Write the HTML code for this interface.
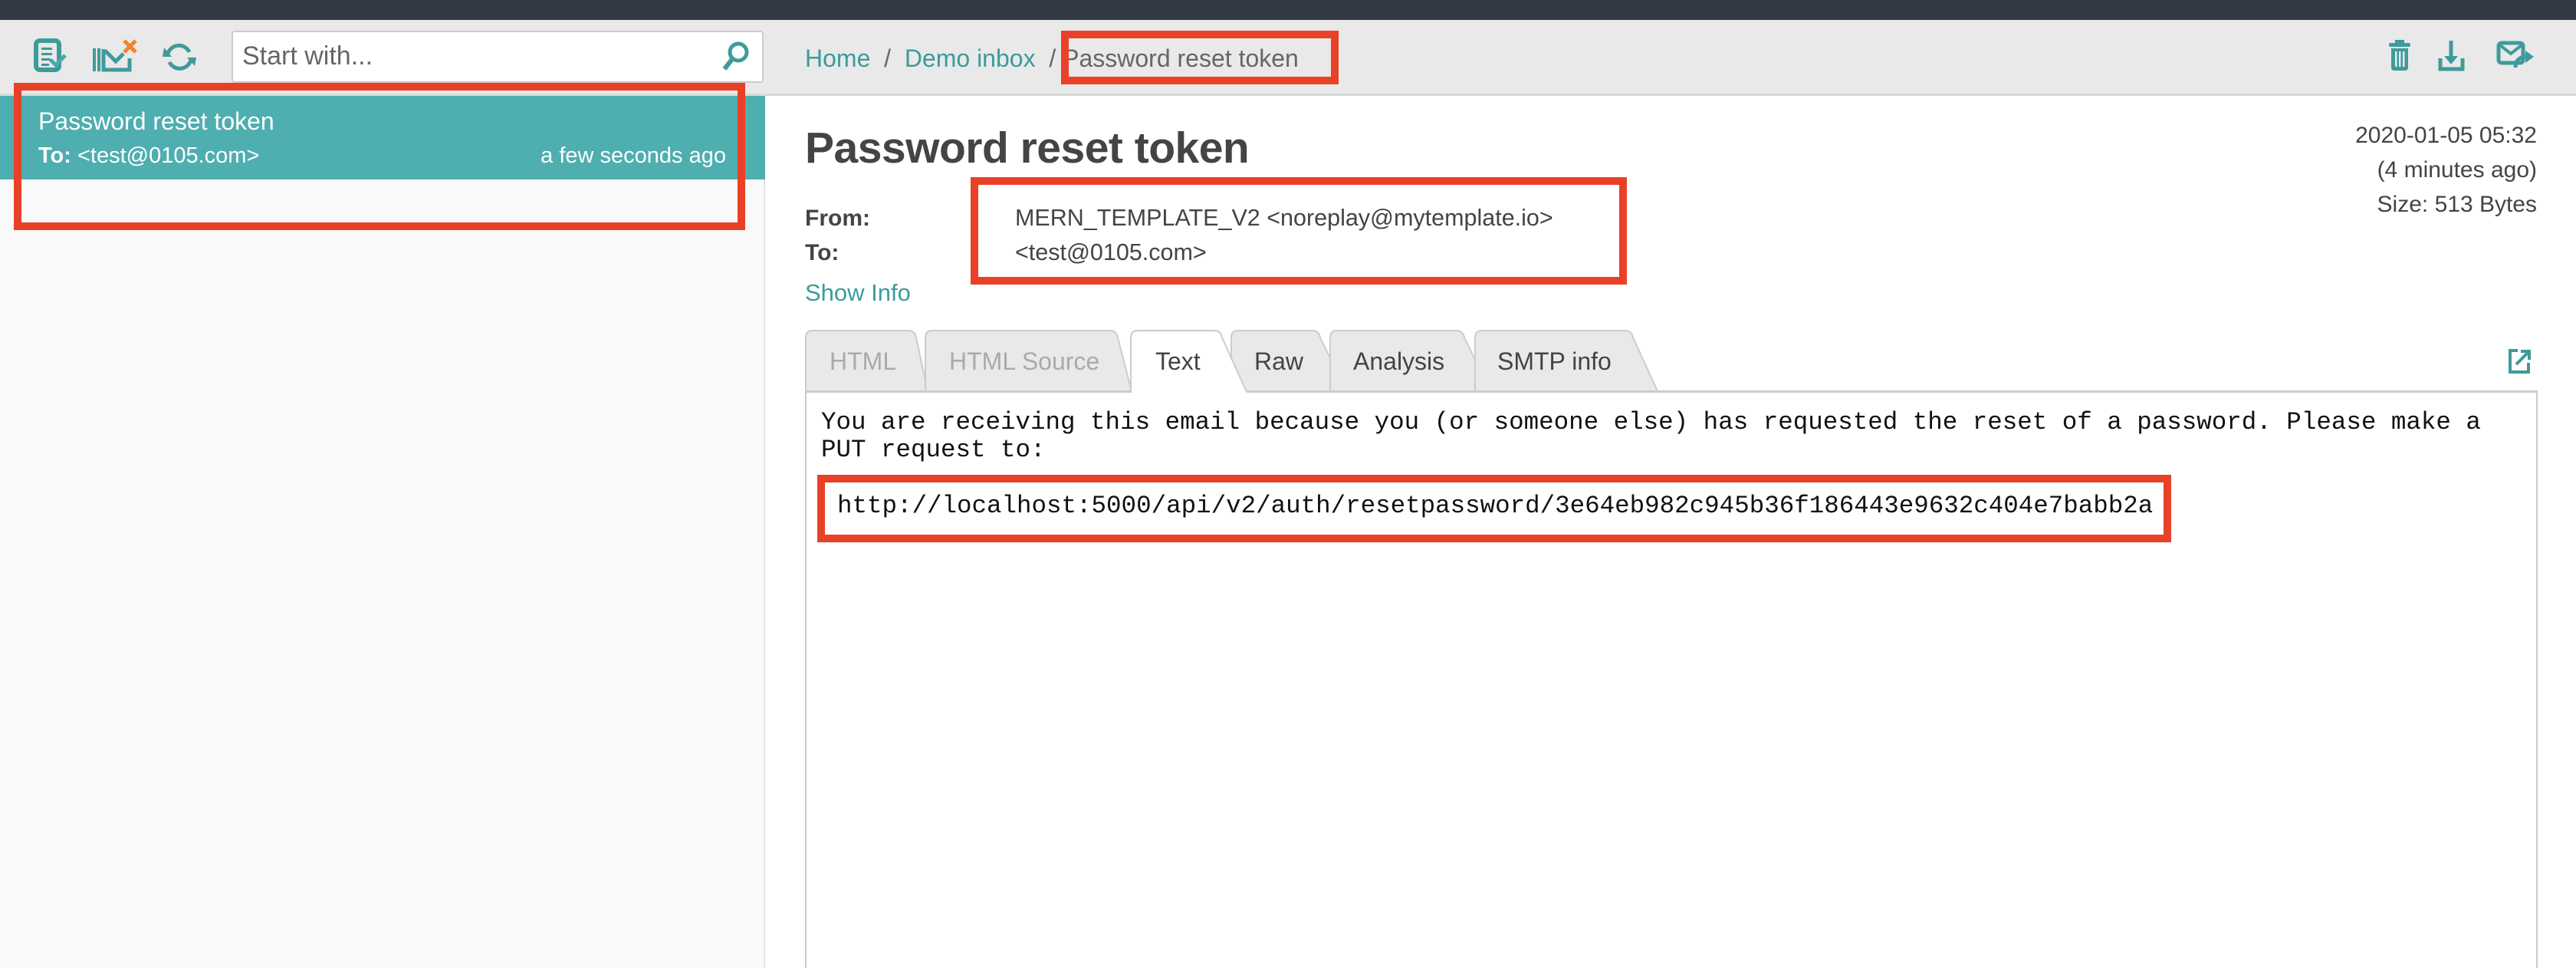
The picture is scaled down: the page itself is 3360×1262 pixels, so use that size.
<!DOCTYPE html>
<html style="width:3360px;height:1262px;overflow:hidden"><head><meta charset="utf-8"><style>
*{margin:0;padding:0;box-sizing:border-box}
body{width:3360px;height:1262px;overflow:hidden;font-family:"Liberation Sans",sans-serif;background:#fff;position:relative;color:#444}
.a{position:absolute;white-space:nowrap}
.red{position:absolute;border:10px solid #e94128}
.teal{color:#3b9b9c}
.mono{font-family:"Liberation Mono",monospace;font-size:32.5px;color:#111}
</style></head><body>
<div class="a" style="left:0;top:0;width:3360px;height:26px;background:#333a45"></div>
<div class="a" style="left:0;top:26px;width:3360px;height:99px;background:#e9e9e9;border-bottom:3px solid #d9d9d9"></div>
<div class="a" style="left:0;top:125px;width:998px;height:1137px;background:#f9f9f9;border-right:2px solid #e4e4e4"></div>

<svg class="a" style="left:44px;top:48px" width="220" height="50" viewBox="0 0 220 50">
<rect x="3" y="5" width="30" height="38" rx="5" fill="none" stroke="#3f9a9b" stroke-width="6"/>
<rect x="10" y="14" width="14" height="3" fill="#3f9a9b"/><rect x="10" y="21" width="14" height="3" fill="#3f9a9b"/><rect x="10" y="28" width="12" height="3" fill="#3f9a9b"/><rect x="10" y="35" width="10" height="3" fill="#3f9a9b"/>
<path d="M22 30 L29 37 L41 24" fill="none" stroke="#4aa9aa" stroke-width="5"/>
<rect x="77" y="15" width="4" height="30" fill="#3f9a9b"/><rect x="83" y="15" width="4" height="30" fill="#3f9a9b"/>
<path d="M91 16 L91 43 L125 43 L125 28" fill="none" stroke="#3f9a9b" stroke-width="5"/>
<path d="M93 18 L107 32 L117 22" fill="none" stroke="#3f9a9b" stroke-width="5"/>
<path d="M118 5 L133 20 M133 5 L118 20" stroke="#f0852d" stroke-width="5"/>
<path d="M175 22 A15 15 0 0 1 203 20" fill="none" stroke="#3f9a9b" stroke-width="5"/>
<path d="M170 14 L180 26 L168 26Z" fill="#3f9a9b"/>
<path d="M205 30 A15 15 0 0 1 177 33" fill="none" stroke="#3f9a9b" stroke-width="5"/>
<path d="M210 38 L200 27 L212 27Z" fill="#3f9a9b"/>
</svg>

<div class="a" style="left:302px;top:40px;width:694px;height:68px;background:#fff;border:2px solid #ccc;border-radius:4px"></div>
<div class="a" style="left:316px;top:54px;font-size:34px;color:#666">Start with...</div>
<svg class="a" style="left:940px;top:52px" width="40" height="44" viewBox="0 0 40 44"><circle cx="23" cy="16" r="11" fill="none" stroke="#3f9a9b" stroke-width="5"/><path d="M15 25 L5 38" stroke="#3f9a9b" stroke-width="6"/></svg>

<div class="a" style="left:0;top:125px;width:998px;height:109px;background:#4faeaf"></div>
<div class="a" style="left:50px;top:140px;font-size:32px;color:#fff">Password reset token</div>
<div class="a" style="left:50px;top:187px;font-size:29px;color:#fff"><b>To:</b> &lt;test@0105.com&gt;</div>
<div class="a" style="left:700px;width:247px;text-align:right;top:187px;font-size:29px;color:#fff">a few seconds ago</div>
<div class="red" style="left:18px;top:108px;width:954px;height:192px"></div>

<div class="a" style="left:1050px;top:58px;font-size:32px;color:#666"><span class="teal">Home</span> &nbsp;/&nbsp; <span class="teal">Demo inbox</span> &nbsp;/&nbsp;<span style="color:#666">Password reset token</span></div>
<div class="red" style="left:1384px;top:40px;width:362px;height:70px"></div>

<svg class="a" style="left:3110px;top:48px" width="210" height="50" viewBox="0 0 210 50">
<rect x="6" y="8" width="28" height="5" rx="2" fill="#3f9a9b"/><rect x="14" y="4" width="12" height="5" fill="#3f9a9b"/>
<path d="M9 15 H31 V40 Q31 44 27 44 H13 Q9 44 9 40Z" fill="#3f9a9b"/>
<rect x="14" y="19" width="2.5" height="20" fill="#e9e9e9"/><rect x="19" y="19" width="2.5" height="20" fill="#e9e9e9"/><rect x="24" y="19" width="2.5" height="20" fill="#e9e9e9"/>
<path d="M87 5 V32" stroke="#3f9a9b" stroke-width="5"/><path d="M78 25 L87 36 L96 25Z" fill="#3f9a9b"/>
<path d="M73 28 V42 H102 V28" fill="none" stroke="#3f9a9b" stroke-width="5"/>
<g transform="translate(-14,0)">
<rect x="163" y="8" width="32" height="26" rx="4" fill="none" stroke="#3f9a9b" stroke-width="5"/>
<path d="M165 11 L179 22 L193 11" fill="none" stroke="#3f9a9b" stroke-width="4"/>
<path d="M185 40 Q185 26 200 26" fill="none" stroke="#3f9a9b" stroke-width="5"/>
<path d="M198 18 L209 26 L198 34Z" fill="#3f9a9b"/>
</g>
</svg>

<div class="a" style="left:1050px;top:160px;font-size:57px;font-weight:bold;color:#444;letter-spacing:-0.5px">Password reset token</div>
<div class="a" style="left:2900px;width:409px;text-align:right;top:154px;font-size:30px;line-height:45px;color:#444">2020-01-05 05:32<br>(4 minutes ago)<br>Size: 513 Bytes</div>
<div class="a" style="left:1050px;top:262px;font-size:30px;line-height:45px;font-weight:bold;color:#444">From:<br>To:</div>
<div class="a" style="left:1324px;top:262px;font-size:30.5px;line-height:45px;color:#444">MERN_TEMPLATE_V2 &lt;noreplay@mytemplate.io&gt;<br>&lt;test@0105.com&gt;</div>
<div class="red" style="left:1266px;top:231px;width:856px;height:140px"></div>
<div class="a teal" style="left:1050px;top:364px;font-size:31px">Show Info</div>

<svg class="a" style="left:1040px;top:420px" width="1140" height="95" viewBox="1040 420 1140 95">
<g stroke="#ccc" stroke-width="2" fill="#e9e9e9">
<path d="M1051 510 V440 Q1051 431 1060 431 H1185 Q1193 431 1195 440 L1210 510Z"/>
<path d="M1207 510 V440 Q1207 431 1216 431 H1448 Q1456 431 1458 440 L1476 510Z"/>
<path d="M1606 510 V440 Q1606 431 1615 431 H1712 Q1720 431 1722 440 L1756 510Z"/>
<path d="M1735 510 V440 Q1735 431 1744 431 H1900 Q1908 431 1910 440 L1944 510Z"/>
<path d="M1924 510 V440 Q1924 431 1933 431 H2120 Q2128 431 2130 440 L2162 510Z"/>
<path d="M1475 511 V440 Q1475 431 1484 431 H1584 Q1592 431 1594 440 L1626 511" fill="#fff"/>
</g>
</svg>
<div class="a" style="left:1050px;top:510px;width:2260px;height:752px;border:2px solid #ccc;border-top:none;border-bottom:none"></div>
<div class="a" style="left:1626px;top:509px;width:1684px;height:3px;background:#ccc"></div>
<div class="a" style="left:1050px;top:509px;width:426px;height:3px;background:#ccc"></div>
<div class="a" style="left:1082px;top:453px;font-size:32px;color:#aaa">HTML</div>
<div class="a" style="left:1238px;top:453px;font-size:32px;color:#aaa">HTML Source</div>
<div class="a" style="left:1507px;top:453px;font-size:32px;color:#444">Text</div>
<div class="a" style="left:1636px;top:453px;font-size:32px;color:#444">Raw</div>
<div class="a" style="left:1765px;top:453px;font-size:32px;color:#444">Analysis</div>
<div class="a" style="left:1953px;top:453px;font-size:32px;color:#444">SMTP info</div>
<svg class="a" style="left:3270px;top:453px" width="32" height="36" viewBox="0 0 32 36"><path d="M14 4 H4 V32 H28 V20" fill="none" stroke="#3f9a9b" stroke-width="4"/><path d="M12 22 L27 7 M18 5 H29 V16" fill="none" stroke="#3f9a9b" stroke-width="4"/></svg>

<div class="a mono" style="left:1071px;top:533px;line-height:36px">You are receiving this email because you (or someone else) has requested the reset of a password. Please make a<br>PUT request to:</div>
<div class="a mono" style="left:1092px;top:641px">http://localhost:5000/api/v2/auth/resetpassword/3e64eb982c945b36f186443e9632c404e7babb2a</div>
<div class="red" style="left:1066px;top:619px;width:1766px;height:88px"></div>
</body></html>
